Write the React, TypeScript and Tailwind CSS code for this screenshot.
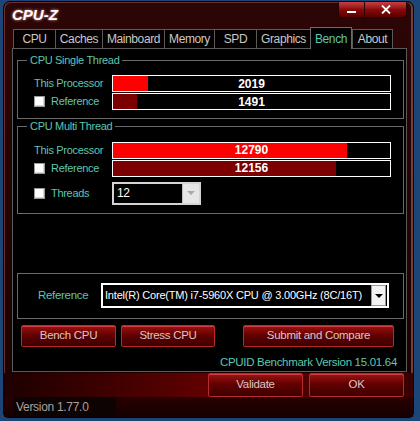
import React from "react"

const tabs = [
  { name: "CPU", w: "w-[42px]" },
  { name: "Caches", w: "w-[47px]" },
  { name: "Mainboard", w: "w-[62px]" },
  { name: "Memory", w: "w-[50px]" },
  { name: "SPD", w: "w-[42px]" },
  { name: "Graphics", w: "w-[54px]" },
  { name: "Bench", w: "w-[42px]", active: true },
  { name: "About", w: "w-[41px]" },
]

function Bar({ pct, value, dark }: { pct: number; value: string; dark?: boolean }) {
  return (
    <div className="relative w-[279px] h-[17px] border border-white bg-black">
      <div
        className={dark ? "h-full bg-[#7c0000]" : "h-full bg-[#ff0000]"}
        style={{ width: `${pct}%` }}
      />
      <span className="absolute inset-0 flex items-center justify-center text-white font-bold text-[12px] tracking-normal">
        {value}
      </span>
    </div>
  )
}

function Check() {
  return <div className="w-[11px] h-[11px] bg-white border border-[#9a9a9a] shadow-[inset_-1px_-1px_0_#d8d8d8]" />
}

function RedButton({ label, w, h = "h-[22px]" }: { label: string; w: string; h?: string }) {
  return (
    <div
      className={`${w} ${h} flex items-center justify-center rounded-[2px] border border-[#b82a2a] bg-gradient-to-b from-[#9a1414] via-[#600000] to-[#3c0000] text-[#d9c6c6] text-[11.5px] shadow-[inset_0_1px_0_#d04040]`}
    >
      {label}
    </div>
  )
}

export default function App() {
  return (
    <div className="w-[420px] h-[421px] bg-[#1b4677] overflow-hidden font-['Liberation_Sans',Arial,sans-serif] text-[11px] tracking-[-0.3px]">
      <div className="ml-[3px] mt-[1px] w-[411px] h-[417px] rounded-t-[7px] rounded-b-[5px] border border-[#0e0000] bg-gradient-to-b from-[#2c0606] via-[#240303] to-[#1a0000] shadow-[inset_1px_1px_0_#6a3030,inset_-2px_0_0_#7a3a3a] flex flex-col">
        {/* title bar */}
        <div className="h-[26px] flex justify-between items-start">
          <div className="pl-[8px] pt-[2px] text-[15px] font-bold italic text-white tracking-normal [text-shadow:0_0_3px_#ff9a9a]">
            CPU-Z
          </div>
          <div className="flex mr-[6px] -mt-px">
            <div className="w-[27px] h-[17px] rounded-bl-[4px] border border-[#2a0000] bg-gradient-to-b from-[#c84040] via-[#8a0a0a] to-[#5a0000] flex items-end justify-center pb-[4px]">
              <div className="w-[9px] h-[2px] bg-white" />
            </div>
            <div className="w-[42px] h-[17px] rounded-br-[4px] border border-l-0 border-[#2a0000] bg-gradient-to-b from-[#c84040] via-[#8a0a0a] to-[#5a0000] flex items-center justify-center">
              <svg width="10" height="9" viewBox="0 0 10 9">
                <path d="M1 0.5 L9 8.5 M9 0.5 L1 8.5" stroke="white" strokeWidth="1.8" />
              </svg>
            </div>
          </div>
        </div>

        {/* tabs */}
        <div className="h-[20px] flex items-end pl-[9px] text-[#c8c8c8] tracking-[-0.4px]">
          {tabs.map((t) =>
            t.active ? (
              <div
                key={t.name}
                className={`${t.w} h-[22px] -mb-px relative z-10 bg-black border border-b-0 border-[#6a6a6a] flex items-center justify-center text-[#5ec6b2] text-[12px]`}
              >
                {t.name}
              </div>
            ) : (
              <div
                key={t.name}
                className={`${t.w} h-[19px] bg-[#050000] border border-b-0 border-r-0 border-[#5a5a5a] flex items-center justify-center text-[12px] last:border-r`}
              >
                {t.name}
              </div>
            )
          )}
        </div>

        {/* panel */}
        <div className="ml-[8px] w-[395px] h-[324px] border border-[#5a5a5a] bg-black flex flex-col pl-[4px]">
          <fieldset className="mt-[5px] w-[387px] h-[66px] border border-[#6a6a6a]">
            <legend className="ml-[9px] px-[3px] text-[#5ec6b2] text-[11px] leading-[13px]">CPU Single Thread</legend>
            <div className="mt-[8px] flex flex-col gap-[1px] pl-[16px]">
              <div className="flex items-center">
                <div className="w-[78px] text-[#5ec6b2]">This Processor</div>
                <Bar pct={12.6} value="2019" />
              </div>
              <div className="flex items-center">
                <div className="w-[78px] flex items-center gap-[6px] text-[#5ec6b2]">
                  <Check />
                  Reference
                </div>
                <Bar pct={8.8} value="1491" dark />
              </div>
            </div>
          </fieldset>

          <fieldset className="mt-[1px] w-[387px] h-[96px] border border-[#6a6a6a]">
            <legend className="ml-[9px] px-[3px] text-[#5ec6b2] text-[11px] leading-[13px]">CPU Multi Thread</legend>
            <div className="mt-[9px] flex flex-col gap-[1px] pl-[16px]">
              <div className="flex items-center">
                <div className="w-[78px] text-[#5ec6b2]">This Processor</div>
                <Bar pct={84.6} value="12790" />
              </div>
              <div className="flex items-center">
                <div className="w-[78px] flex items-center gap-[6px] text-[#5ec6b2]">
                  <Check />
                  Reference
                </div>
                <Bar pct={80.6} value="12156" dark />
              </div>
              <div className="flex items-center mt-[4px]">
                <div className="w-[78px] flex items-center gap-[6px] text-[#5ec6b2]">
                  <Check />
                  Threads
                </div>
                <div className="w-[89px] h-[23px] border-2 border-[#d4d4d4] bg-black flex items-center">
                  <span className="flex-1 pl-[3px] text-white text-[12px]">12</span>
                  <div className="w-[17px] h-full bg-[#e6e6e6] border-l border-[#bdbdbd] flex items-center justify-center">
                    <div className="w-0 h-0 border-l-[4px] border-r-[4px] border-t-[4px] border-l-transparent border-r-transparent border-t-[#a8a8a8]" />
                  </div>
                </div>
              </div>
            </div>
          </fieldset>

          <fieldset className="mt-[59px] w-[387px] h-[47px] border border-[#6a6a6a] flex items-center">
            <div className="flex items-center h-full">
              <div className="w-[83px] pl-[20px] text-[#5ec6b2] text-[11.5px]">Reference</div>
              <div className="w-[288px] h-[25px] border-2 border-white bg-black flex items-center">
                <span className="flex-1 pl-[2px] text-white text-[11px] tracking-[-0.2px] whitespace-nowrap">
                  Intel(R) Core(TM) i7-5960X CPU @ 3.00GHz (8C/16T)
                </span>
                <div className="shrink-0 w-[15px] h-[21px] bg-[#f2f2f2] border border-[#9a9a9a] flex items-center justify-center mr-[1px]">
                  <div className="w-0 h-0 border-l-[4px] border-r-[4px] border-t-[4px] border-l-transparent border-r-transparent border-t-black" />
                </div>
              </div>
            </div>
          </fieldset>

          <div className="mt-[6px] flex ml-[4px]">
            <RedButton label="Bench CPU" w="w-[95px]" />
            <div className="ml-[5px]">
              <RedButton label="Stress CPU" w="w-[94px]" />
            </div>
            <div className="ml-[28px]">
              <RedButton label="Submit and Compare" w="w-[151px]" />
            </div>
          </div>
          <div className="mt-[7px] pr-[9px] text-right text-[#5ec6b2] text-[11.5px]">
            CPUID Benchmark Version 15.01.64
          </div>
        </div>

        {/* bottom buttons */}
        <div className="mt-px h-[24px] flex justify-end gap-[6px] pr-[9px] bg-gradient-to-r from-[#1e0000] via-[#620000] to-[#3a0000]">
          <RedButton label="Validate" w="w-[95px]" h="h-[24px]" />
          <RedButton label="OK" w="w-[95px]" h="h-[24px]" />
        </div>
        <div className="flex-1 flex items-center bg-gradient-to-b from-[#2a0000] to-[#140000]">
          <div className="ml-[10px] w-[102px] h-full flex items-center pl-[2px] bg-[#0e0303] text-[#a6a0a0] text-[12px]">
            Version 1.77.0
          </div>
        </div>
      </div>
    </div>
  )
}
